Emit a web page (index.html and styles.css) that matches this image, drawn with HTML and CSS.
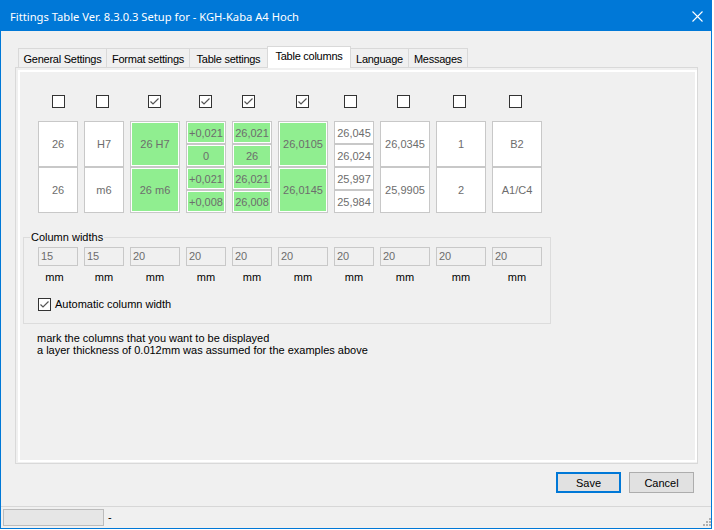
FILE: index.html
```html
<!DOCTYPE html>
<html>
<head>
<meta charset="utf-8">
<link rel="stylesheet" href="styles.css">
</head>
<body>
<div class="window">
  <div class="titlebar">
    <span class="title">Fittings Table Ver. 8.3.0.3 Setup for - KGH-Kaba A4 Hoch</span>
    <svg class="close" width="11" height="11" viewBox="0 0 11 11"><path d="M0.5 0.5 L10.5 10.5 M10.5 0.5 L0.5 10.5" stroke="#fff" stroke-width="1.1" fill="none"/></svg>
  </div>

  <div class="tabs">
    <div class="tab w89">General Settings</div>
    <div class="tab w84">Format settings</div>
    <div class="tab w79">Table settings</div>
    <div class="tab w84 sel">Table columns</div>
    <div class="tab w59">Language</div>
    <div class="tab w60">Messages</div>
  </div>

  <div class="panel">
    <div class="page">
      <div class="cols top">
        <span class="cb o14"></span>
        <span class="cb o12"></span>
        <span class="cb o18 on"><svg width="11" height="11" viewBox="0 0 11 11"><path d="M1.5 5.5 L4 8 L9.5 2.5" stroke="#555" stroke-width="1.2" fill="none"/></svg></span>
        <span class="cb o13 on"><svg width="11" height="11" viewBox="0 0 11 11"><path d="M1.5 5.5 L4 8 L9.5 2.5" stroke="#555" stroke-width="1.2" fill="none"/></svg></span>
        <span class="cb o10 on"><svg width="11" height="11" viewBox="0 0 11 11"><path d="M1.5 5.5 L4 8 L9.5 2.5" stroke="#555" stroke-width="1.2" fill="none"/></svg></span>
        <span class="cb o18 on"><svg width="11" height="11" viewBox="0 0 11 11"><path d="M1.5 5.5 L4 8 L9.5 2.5" stroke="#555" stroke-width="1.2" fill="none"/></svg></span>
        <span class="cb o10"></span>
        <span class="cb o17"></span>
        <span class="cb o17"></span>
        <span class="cb o17"></span>

        <div class="stack"><div class="cell">26</div><div class="cell">26</div></div>
        <div class="stack"><div class="cell">H7</div><div class="cell">m6</div></div>
        <div class="stack"><div class="cell green">26 H7</div><div class="cell green">26 m6</div></div>
        <div class="stack"><div class="cell green">+0,021</div><div class="cell green">0</div><div class="cell green">+0,021</div><div class="cell green">+0,008</div></div>
        <div class="stack"><div class="cell green">26,021</div><div class="cell green">26</div><div class="cell green">26,021</div><div class="cell green">26,008</div></div>
        <div class="stack"><div class="cell green">26,0105</div><div class="cell green">26,0145</div></div>
        <div class="stack"><div class="cell">26,045</div><div class="cell">26,024</div><div class="cell">25,997</div><div class="cell">25,984</div></div>
        <div class="stack"><div class="cell">26,0345</div><div class="cell">25,9905</div></div>
        <div class="stack"><div class="cell">1</div><div class="cell">2</div></div>
        <div class="stack"><div class="cell">B2</div><div class="cell">A1/C4</div></div>
      </div>

      <fieldset class="group">
        <legend>Column widths</legend>
        <div class="cols inputs">
          <div class="tb">15</div><div class="tb">15</div><div class="tb">20</div><div class="tb">20</div><div class="tb">20</div>
          <div class="tb">20</div><div class="tb">20</div><div class="tb">20</div><div class="tb">20</div><div class="tb">20</div>
          <div class="mm first">mm</div><div class="mm">mm</div><div class="mm">mm</div><div class="mm">mm</div><div class="mm">mm</div>
          <div class="mm">mm</div><div class="mm">mm</div><div class="mm">mm</div><div class="mm">mm</div><div class="mm">mm</div>
        </div>
        <div class="auto">
          <span class="cb on"><svg width="11" height="11" viewBox="0 0 11 11"><path d="M1.5 5.5 L4 8 L9.5 2.5" stroke="#555" stroke-width="1.2" fill="none"/></svg></span>
          <span class="auto-label">Automatic column width</span>
        </div>
      </fieldset>

      <div class="notes">
        <div>mark the columns that you want to be displayed</div>
        <div>a layer thickness of 0.012mm was assumed for the examples above</div>
      </div>
    </div>
  </div>

  <div class="buttons">
    <div class="btn default">Save</div>
    <div class="btn">Cancel</div>
  </div>

  <div class="statusbar">
    <div class="status-box"></div>
    <span class="status-text">-</span>
    <svg class="grip" width="8" height="8" viewBox="0 0 8 8">
      <rect x="6" y="0" width="2" height="2" fill="#b0b0b0"/>
      <rect x="3" y="3" width="2" height="2" fill="#b0b0b0"/>
      <rect x="6" y="3" width="2" height="2" fill="#b0b0b0"/>
      <rect x="0" y="6" width="2" height="2" fill="#b0b0b0"/>
      <rect x="3" y="6" width="2" height="2" fill="#b0b0b0"/>
      <rect x="6" y="6" width="2" height="2" fill="#b0b0b0"/>
    </svg>
  </div>
</div>
</body>
</html>
```
FILE: styles.css
```css
html, body {
  margin: 0;
  padding: 0;
  background: #ffffff;
}

.window {
  width: 712px;
  height: 529px;
  box-sizing: border-box;
  border: 1px solid #0078d7;
  background: #f0f0f0;
  display: flex;
  flex-direction: column;
  font-family: "Liberation Sans", Arial, sans-serif;
  font-size: 11px;
  color: #000;
}

.titlebar {
  flex: none;
  height: 30px;
  margin-top: -1px;
  padding-top: 1px;
  background: #0078d7;
  color: #fff;
  display: flex;
  align-items: center;
  padding-left: 9px;
  padding-right: 8px;
  font-family: "Noto Sans", "Open Sans", sans-serif;
  font-size: 11.2px;
}

.title {
  flex: 1;
  white-space: nowrap;
}

.close {
  flex: none;
}

.tabs {
  flex: none;
  display: flex;
  align-items: flex-end;
  height: 21px;
  margin: 15px 0 0 17px;
}

.tab {
  box-sizing: border-box;
  height: 19px;
  border: 1px solid #d9d9d9;
  border-bottom: none;
  margin-right: -1px;
  display: flex;
  align-items: center;
  justify-content: center;
  background: #f0f0f0;
  white-space: nowrap;
  padding-top: 1px;
  letter-spacing: -0.25px;
}

.tab.sel {
  height: 22px;
  background: #fff;
  margin-bottom: -1px;
  position: relative;
  z-index: 1;
  padding-top: 0;
  padding-bottom: 3px;
}

.w89 { width: 89px; }
.w84 { width: 84px; }
.w79 { width: 79px; }
.w59 { width: 59px; }
.w60 { width: 60px; }

.panel {
  flex: none;
  box-sizing: border-box;
  width: 683px;
  height: 397px;
  margin-left: 14px;
  border: 1px solid #d9d9d9;
  padding: 2px 0 1px 2px;
}

.page {
  box-sizing: border-box;
  height: 100%;
  border: 2px solid #fff;
  padding: 23px 0 0 0;
}

.cols {
  display: grid;
  grid-template-columns: 40px 40px 50px 40px 40px 50px 40px 50px 50px 50px;
  column-gap: 6px;
  row-gap: 13px;
}

.cols.top {
  margin-left: 18px;
}

.cb {
  box-sizing: border-box;
  width: 13px;
  height: 13px;
  border: 1px solid #333;
  background: #fff;
  display: block;
}

.cb svg {
  display: block;
}

.o10 { margin-left: 10px; }
.o12 { margin-left: 12px; }
.o13 { margin-left: 13px; }
.o14 { margin-left: 14px; }
.o17 { margin-left: 17px; }
.o18 { margin-left: 18px; }

.stack {
  height: 92px;
  display: flex;
  flex-direction: column;
}

.cell {
  flex: 1;
  box-sizing: border-box;
  border: 1px solid #c8c8c8;
  background: #fff;
  color: #6d6d6d;
  display: flex;
  align-items: center;
  justify-content: center;
  white-space: nowrap;
}

.cell.green {
  background: #90ee90;
  box-shadow: inset 0 0 0 1px #fff;
}

.group {
  box-sizing: border-box;
  width: 528px;
  min-inline-size: 0;
  margin: 18px 0 0 3px;
  border: 1px solid #dcdcdc;
  padding: 3px 0 12px 0;
}

.group legend {
  margin-left: 6px;
  padding: 0 1px;
  line-height: 13px;
}

.inputs {
  margin-left: 14px;
  row-gap: 5px;
}

.tb {
  box-sizing: border-box;
  height: 19px;
  border: 1px solid #c8c8c8;
  background: #f0f0f0;
  color: #6d6d6d;
  padding-left: 2px;
  line-height: 17px;
}

.mm {
  text-align: center;
  line-height: 13px;
}

.mm.first {
  margin-left: -7px;
}

.auto {
  display: flex;
  align-items: center;
  margin: 14px 0 0 14px;
}

.auto-label {
  margin-left: 4px;
  line-height: 13px;
}

.notes {
  margin: 8px 0 0 17px;
  line-height: 12px;
}

.buttons {
  flex: none;
  display: flex;
  justify-content: flex-end;
  gap: 8px;
  margin-top: 8px;
  padding-right: 17px;
}

.btn {
  box-sizing: border-box;
  width: 65px;
  height: 21px;
  border: 1px solid #adadad;
  background: #e1e1e1;
  display: flex;
  align-items: center;
  justify-content: center;
}

.btn.default {
  border: 2px solid #0078d7;
}

.statusbar {
  flex: 1;
  margin-top: 13px;
  border-top: 1px solid #d7d7d7;
  display: flex;
  align-items: flex-start;
}

.status-box {
  box-sizing: border-box;
  width: 101px;
  height: 17px;
  margin: 2px 0 0 2px;
  border: 1px solid #bcbcbc;
  background: #e6e6e6;
}

.status-text {
  margin: 4px 0 0 4px;
  line-height: 13px;
}

.grip {
  margin: 11px 0 0 auto;
  display: block;
}
```
